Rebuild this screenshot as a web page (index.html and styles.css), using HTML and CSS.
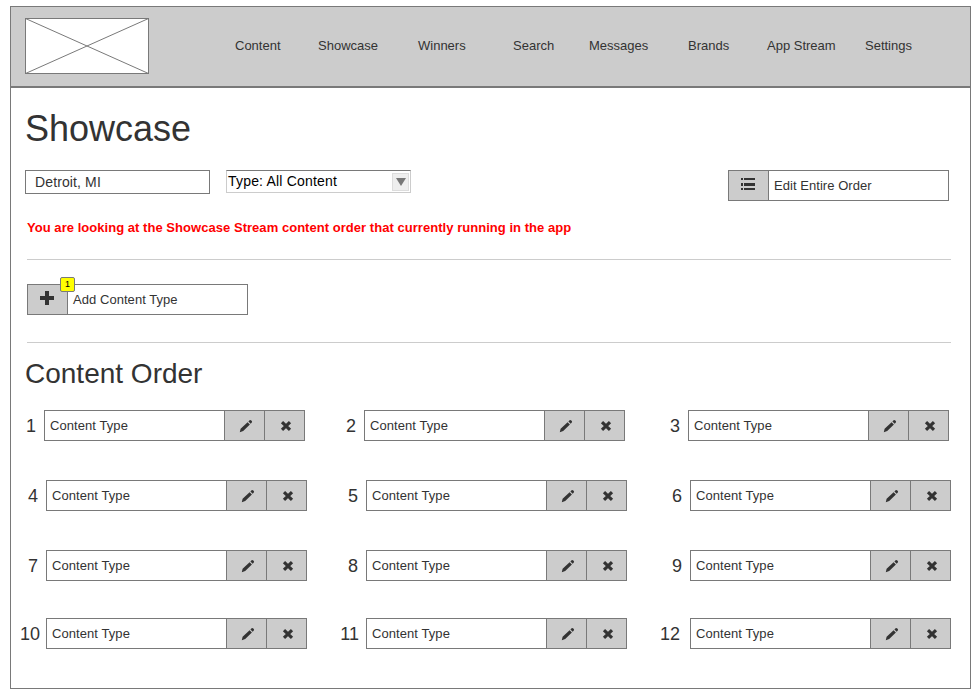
FILE: index.html
```html
<!DOCTYPE html>
<html lang="en">
<head>
<meta charset="utf-8">
<title>Showcase</title>
<link rel="stylesheet" href="styles.css">
</head>
<body>
<svg class="defs" width="0" height="0">
  <symbol id="pencil" viewBox="0 0 14 14"><path d="M.8 13.2 L1.6 9.8 L8.6 3.2 L10.9 5.5 L4.2 12 Z M9.4 2.4 L10.6 1.2 Q11.4 .6 12.3 1.4 L12.8 2 Q13.4 2.7 12.8 3.5 L11.7 4.7 Z"/></symbol>
  <symbol id="cross" viewBox="0 0 12 12"><path d="M2 2.2 L10 9.8 M10 2.2 L2 9.8"/></symbol>
</svg>
<div class="frame">
  <header class="header">
    <svg class="logo" width="124" height="56" viewBox="0 0 124 56"><rect x=".5" y=".5" width="123" height="55"/><path d="M.5 .5L123.5 55.5M123.5 .5L.5 55.5"/></svg>
    <nav class="nav">
      <a class="w83">Content</a><a class="w100">Showcase</a><a class="w95">Winners</a><a class="w76">Search</a><a class="w99">Messages</a><a class="w79">Brands</a><a class="w98">App Stream</a><a>Settings</a>
    </nav>
  </header>
  <main>
    <h1>Showcase</h1>
    <div class="toolbar">
      <div class="field">Detroit, MI</div>
      <div class="select"><span>Type: All Content</span><div class="arrow"><svg width="10" height="8" viewBox="0 0 10 8"><path d="M0 0H10L5 8Z"/></svg></div></div>
      <div class="action edit">
        <div class="icon"><svg width="14" height="13" viewBox="0 0 14 13"><path d="M0 0h2v2H0zM3 0h11v2H3zM0 5h2v3H0zM3 5h11v3H3zM0 10h2v2H0zM3 10h11v2H3z"/></svg></div>
        <span>Edit Entire Order</span>
      </div>
    </div>
    <p class="notice">You are looking at the Showcase Stream content order that currently running in the app</p>
    <div class="rule"></div>
    <div class="action add">
      <div class="icon"><svg width="14" height="14" viewBox="0 0 14 14"><path d="M5 0h4v5h5v4H9v5H5V9H0V5h5z"/></svg></div>
      <span>Add Content Type</span>
      <b class="badge">1</b>
    </div>
    <div class="rule"></div>
    <h2>Content Order</h2>
    <div class="order">
      <div class="row first">
        <div class="item"><span class="num">1</span><div class="box"><span>Content Type</span><i><svg class="pencil"><use href="#pencil"/></svg></i><i><svg class="cross"><use href="#cross"/></svg></i></div></div>
        <div class="item"><span class="num">2</span><div class="box"><span>Content Type</span><i><svg class="pencil"><use href="#pencil"/></svg></i><i><svg class="cross"><use href="#cross"/></svg></i></div></div>
        <div class="item"><span class="num">3</span><div class="box"><span>Content Type</span><i><svg class="pencil"><use href="#pencil"/></svg></i><i><svg class="cross"><use href="#cross"/></svg></i></div></div>
      </div>
      <div class="row">
        <div class="item"><span class="num">4</span><div class="box"><span>Content Type</span><i><svg class="pencil"><use href="#pencil"/></svg></i><i><svg class="cross"><use href="#cross"/></svg></i></div></div>
        <div class="item"><span class="num">5</span><div class="box"><span>Content Type</span><i><svg class="pencil"><use href="#pencil"/></svg></i><i><svg class="cross"><use href="#cross"/></svg></i></div></div>
        <div class="item"><span class="num">6</span><div class="box"><span>Content Type</span><i><svg class="pencil"><use href="#pencil"/></svg></i><i><svg class="cross"><use href="#cross"/></svg></i></div></div>
      </div>
      <div class="row">
        <div class="item"><span class="num">7</span><div class="box"><span>Content Type</span><i><svg class="pencil"><use href="#pencil"/></svg></i><i><svg class="cross"><use href="#cross"/></svg></i></div></div>
        <div class="item"><span class="num">8</span><div class="box"><span>Content Type</span><i><svg class="pencil"><use href="#pencil"/></svg></i><i><svg class="cross"><use href="#cross"/></svg></i></div></div>
        <div class="item"><span class="num">9</span><div class="box"><span>Content Type</span><i><svg class="pencil"><use href="#pencil"/></svg></i><i><svg class="cross"><use href="#cross"/></svg></i></div></div>
      </div>
      <div class="row last">
        <div class="item"><span class="num near">10</span><div class="box"><span>Content Type</span><i><svg class="pencil"><use href="#pencil"/></svg></i><i><svg class="cross"><use href="#cross"/></svg></i></div></div>
        <div class="item"><span class="num mid">11</span><div class="box"><span>Content Type</span><i><svg class="pencil"><use href="#pencil"/></svg></i><i><svg class="cross"><use href="#cross"/></svg></i></div></div>
        <div class="item"><span class="num far">12</span><div class="box"><span>Content Type</span><i><svg class="pencil"><use href="#pencil"/></svg></i><i><svg class="cross"><use href="#cross"/></svg></i></div></div>
      </div>
    </div>
  </main>
</div>
</body>
</html>
```
FILE: styles.css
```css
* { box-sizing: border-box; }
body { margin: 0; padding: 6px 0 0 10px; background: #fff; color: #333; font: 13px/15px "Liberation Sans", Arial, sans-serif; overflow: hidden; }
.defs { position: absolute; }
svg { display: block; fill: #333; }
.frame { width: 961px; height: 683px; border: 1px solid #797979; }
.header { height: 81px; background: #ccc; border-bottom: 2px solid #797979; display: flex; padding: 11px 0 0 14px; }
.logo { fill: #fff; stroke: #797979; flex: none; }
.nav { display: flex; margin: 20px 0 0 86px; }
.nav a { white-space: nowrap; }
.w83 { width: 83px; }
.w100 { width: 100px; }
.w95 { width: 95px; }
.w76 { width: 76px; }
.w99 { width: 99px; }
.w79 { width: 79px; }
.w98 { width: 98px; }
h1 { margin: 20px 0 0 14px; font-size: 36px; line-height: 41px; font-weight: 400; }
h2 { margin: 14px 0 0 14px; font-size: 28px; line-height: 33px; font-weight: 400; }
.toolbar { display: flex; align-items: flex-start; margin: 21px 21px 0 14px; height: 31px; }
.field { width: 185px; height: 24px; border: 1px solid #797979; padding: 3px 0 0 9px; font-size: 14px; line-height: 16px; letter-spacing: .12px; margin-top: 0; }
.select { width: 185px; height: 23px; margin-left: 16px; border: 1px solid #ccc; border-top-color: #797979; color: #000; display: flex; justify-content: space-between; font-size: 14px; line-height: 16px; letter-spacing: .19px; padding: 2px 1px 1px 1px; }
.arrow { width: 17px; height: 18px; background: #eee; border: 1px solid #ddd; display: flex; align-items: center; justify-content: center; }
.arrow svg { fill: #777; }
.action { position: relative; width: 221px; height: 31px; border: 1px solid #797979; display: flex; }
.action > span { padding: 7px 0 0 5px; letter-spacing: .05px; }
.icon { width: 40px; background: #ccc; border-right: 1px solid #797979; padding: 7px 0 0 12px; }
.add .icon { padding-top: 6px; }
.edit { margin-left: auto; }
.notice { margin: 19px 0 0 16px; color: #f00; font-weight: 700; white-space: nowrap; letter-spacing: .04px; }
.rule { width: 924px; height: 1px; margin-left: 16px; background: #ccc; }
.notice + .rule { margin-top: 24px; }
.add { margin: 24px 0 27px 16px; }
.badge { position: absolute; left: 32px; top: -8px; width: 15px; height: 15px; background: #ff0; border: 1px solid #797979; border-radius: 2px; color: #000; font-size: 9px; line-height: 12px; font-weight: 400; text-align: center; }
.order { margin-top: 20px; }
.row { display: grid; grid-template-columns: 320px 324px 300px; margin-left: 5px; height: 70px; }
.first { margin-left: 3px; }
.row:nth-child(3) { height: 68px; }
.last { height: 31px; }
.item { display: flex; height: 31px; }
.num { width: 30px; padding: 6px 8px 0 0; font-size: 18px; line-height: 21px; display: flex; justify-content: flex-end; }
.near { padding-right: 6px; }
.mid { padding-right: 7px; }
.far { padding-right: 10px; }
.box { width: 261px; height: 31px; border: 1px solid #797979; display: flex; background: #ccc; }
.box span { flex: 1; background: #fff; padding: 7px 0 0 5px; letter-spacing: .07px; }
.box i { width: 40px; border-left: 1px solid #797979; display: flex; align-items: center; justify-content: center; }
.pencil { width: 14px; height: 14px; margin: 1px 0 0 3px; }
.cross { width: 12px; height: 12px; margin: 1px 0 0 3px; stroke: #333; stroke-width: 3.2; }
```
